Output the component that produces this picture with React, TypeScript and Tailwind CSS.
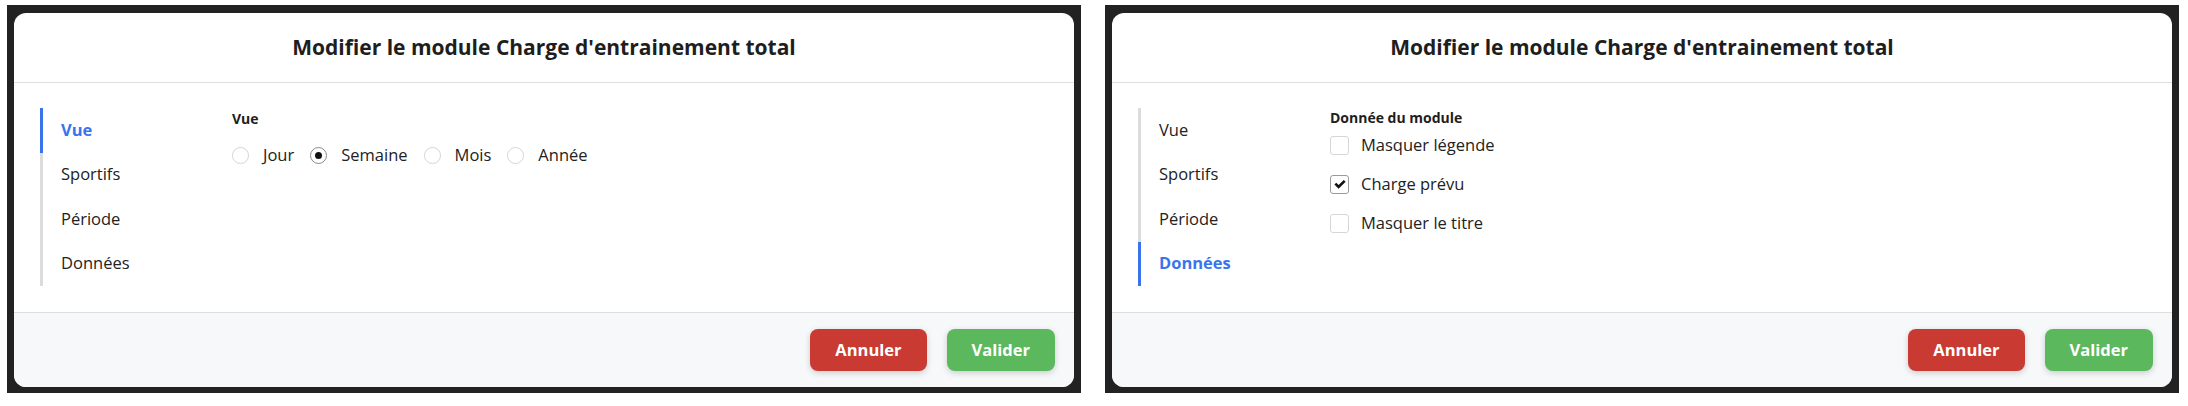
const navItems = ["Vue", "Sportifs", "Période", "Données"];

const views = [
  { label: "Jour", checked: false },
  { label: "Semaine", checked: true },
  { label: "Mois", checked: false },
  { label: "Année", checked: false },
];

const dataOptions = [
  { label: "Masquer légende", checked: false },
  { label: "Charge prévu", checked: true },
  { label: "Masquer le titre", checked: false },
];

function Radio({ checked }: { checked: boolean }) {
  return (
    <span
      className={`flex h-[17px] w-[17px] items-center justify-center rounded-full border bg-white ${
        checked ? "border-[#8a8a8a]" : "border-[#d4d4d4]"
      }`}
    >
      {checked ? <span className="h-[7px] w-[7px] rounded-full bg-[#111]" /> : null}
    </span>
  );
}

function Checkbox({ checked }: { checked: boolean }) {
  return (
    <span
      className={`flex h-[19px] w-[19px] items-center justify-center rounded-[3px] border bg-white ${
        checked ? "border-[#9a9a9a]" : "border-[#d6d6d6]"
      }`}
    >
      {checked ? (
        <svg viewBox="0 0 16 16" className="h-[14px] w-[14px]">
          <path
            d="M1.6 8.6 L3.7 6.5 L6.4 9.2 L12.3 3.3 L14.4 5.4 L6.4 13.4 Z"
            fill="#111"
          />
        </svg>
      ) : null}
    </span>
  );
}

function VueContent() {
  return (
    <div className="pt-[26px]">
      <p className="text-[14px] font-bold leading-5 text-[#1e1e1e]">Vue</p>
      <div className="mt-[14px] flex h-6 items-center">
        {views.map((v) => (
          <label key={v.label} className="mr-[16px] flex items-center gap-[14px] text-[16.5px] text-[#222]">
            <Radio checked={v.checked} />
            <span>{v.label}</span>
          </label>
        ))}
      </div>
    </div>
  );
}

function DataContent() {
  return (
    <div className="pt-[25px]">
      <p className="text-[14px] font-bold leading-5 text-[#1e1e1e]">Donnée du module</p>
      <div className="mt-[5px] flex flex-col gap-[15px]">
        {dataOptions.map((o) => (
          <label key={o.label} className="flex h-6 items-center gap-[12px] text-[16.5px] text-[#222]">
            <Checkbox checked={o.checked} />
            <span>{o.label}</span>
          </label>
        ))}
      </div>
    </div>
  );
}

function Modal({ active }: { active: string }) {
  return (
    <div className="bg-[#222] px-[7px] pt-[8px] pb-[6px]">
      <div className="flex h-[374px] w-[1060px] flex-col overflow-hidden rounded-[12px] bg-white">
        <div className="flex h-[70px] items-center justify-center border-b border-[#dedede]">
          <h2 className="text-[21px] font-bold text-[#1e1e1e]">
            Modifier le module Charge d'entrainement total
          </h2>
        </div>
        <div className="flex flex-1 pl-[26px] pt-[25px]">
          <ul className="w-[192px]">
            {navItems.map((item) => (
              <li
                key={item}
                className={`flex h-[44.5px] items-center border-l-[3px] pl-[18px] text-[16.5px] ${
                  item === active
                    ? "border-[#3a74ec] font-bold text-[#3a74ec]"
                    : "border-[#dcdcdc] text-[#222]"
                }`}
              >
                {item}
              </li>
            ))}
          </ul>
          <div className="-mt-[25px]">
            {active === "Vue" ? <VueContent /> : <DataContent />}
          </div>
        </div>
        <div className="flex h-[75px] items-center justify-end gap-[20px] border-t border-[#dedede] bg-[#f7f8fa] pr-[19px]">
          <button className="h-[42px] rounded-[8px] bg-[#c93a33] px-[25px] text-[16.5px] font-bold text-white shadow-[0_2px_6px_rgba(0,0,0,0.18)]">
            Annuler
          </button>
          <button className="h-[42px] rounded-[8px] bg-[#5cb85c] px-[25px] text-[16.5px] font-bold text-white shadow-[0_2px_6px_rgba(0,0,0,0.18)]">
            Valider
          </button>
        </div>
      </div>
    </div>
  );
}

export default function App() {
  return (
    <div
      className="flex h-[406px] w-[2188px] items-start gap-[24px] bg-white pl-[7px] pt-[5px]"
      style={{ fontFamily: '"Open Sans", sans-serif' }}
    >
      <Modal active="Vue" />
      <Modal active="Données" />
    </div>
  );
}
